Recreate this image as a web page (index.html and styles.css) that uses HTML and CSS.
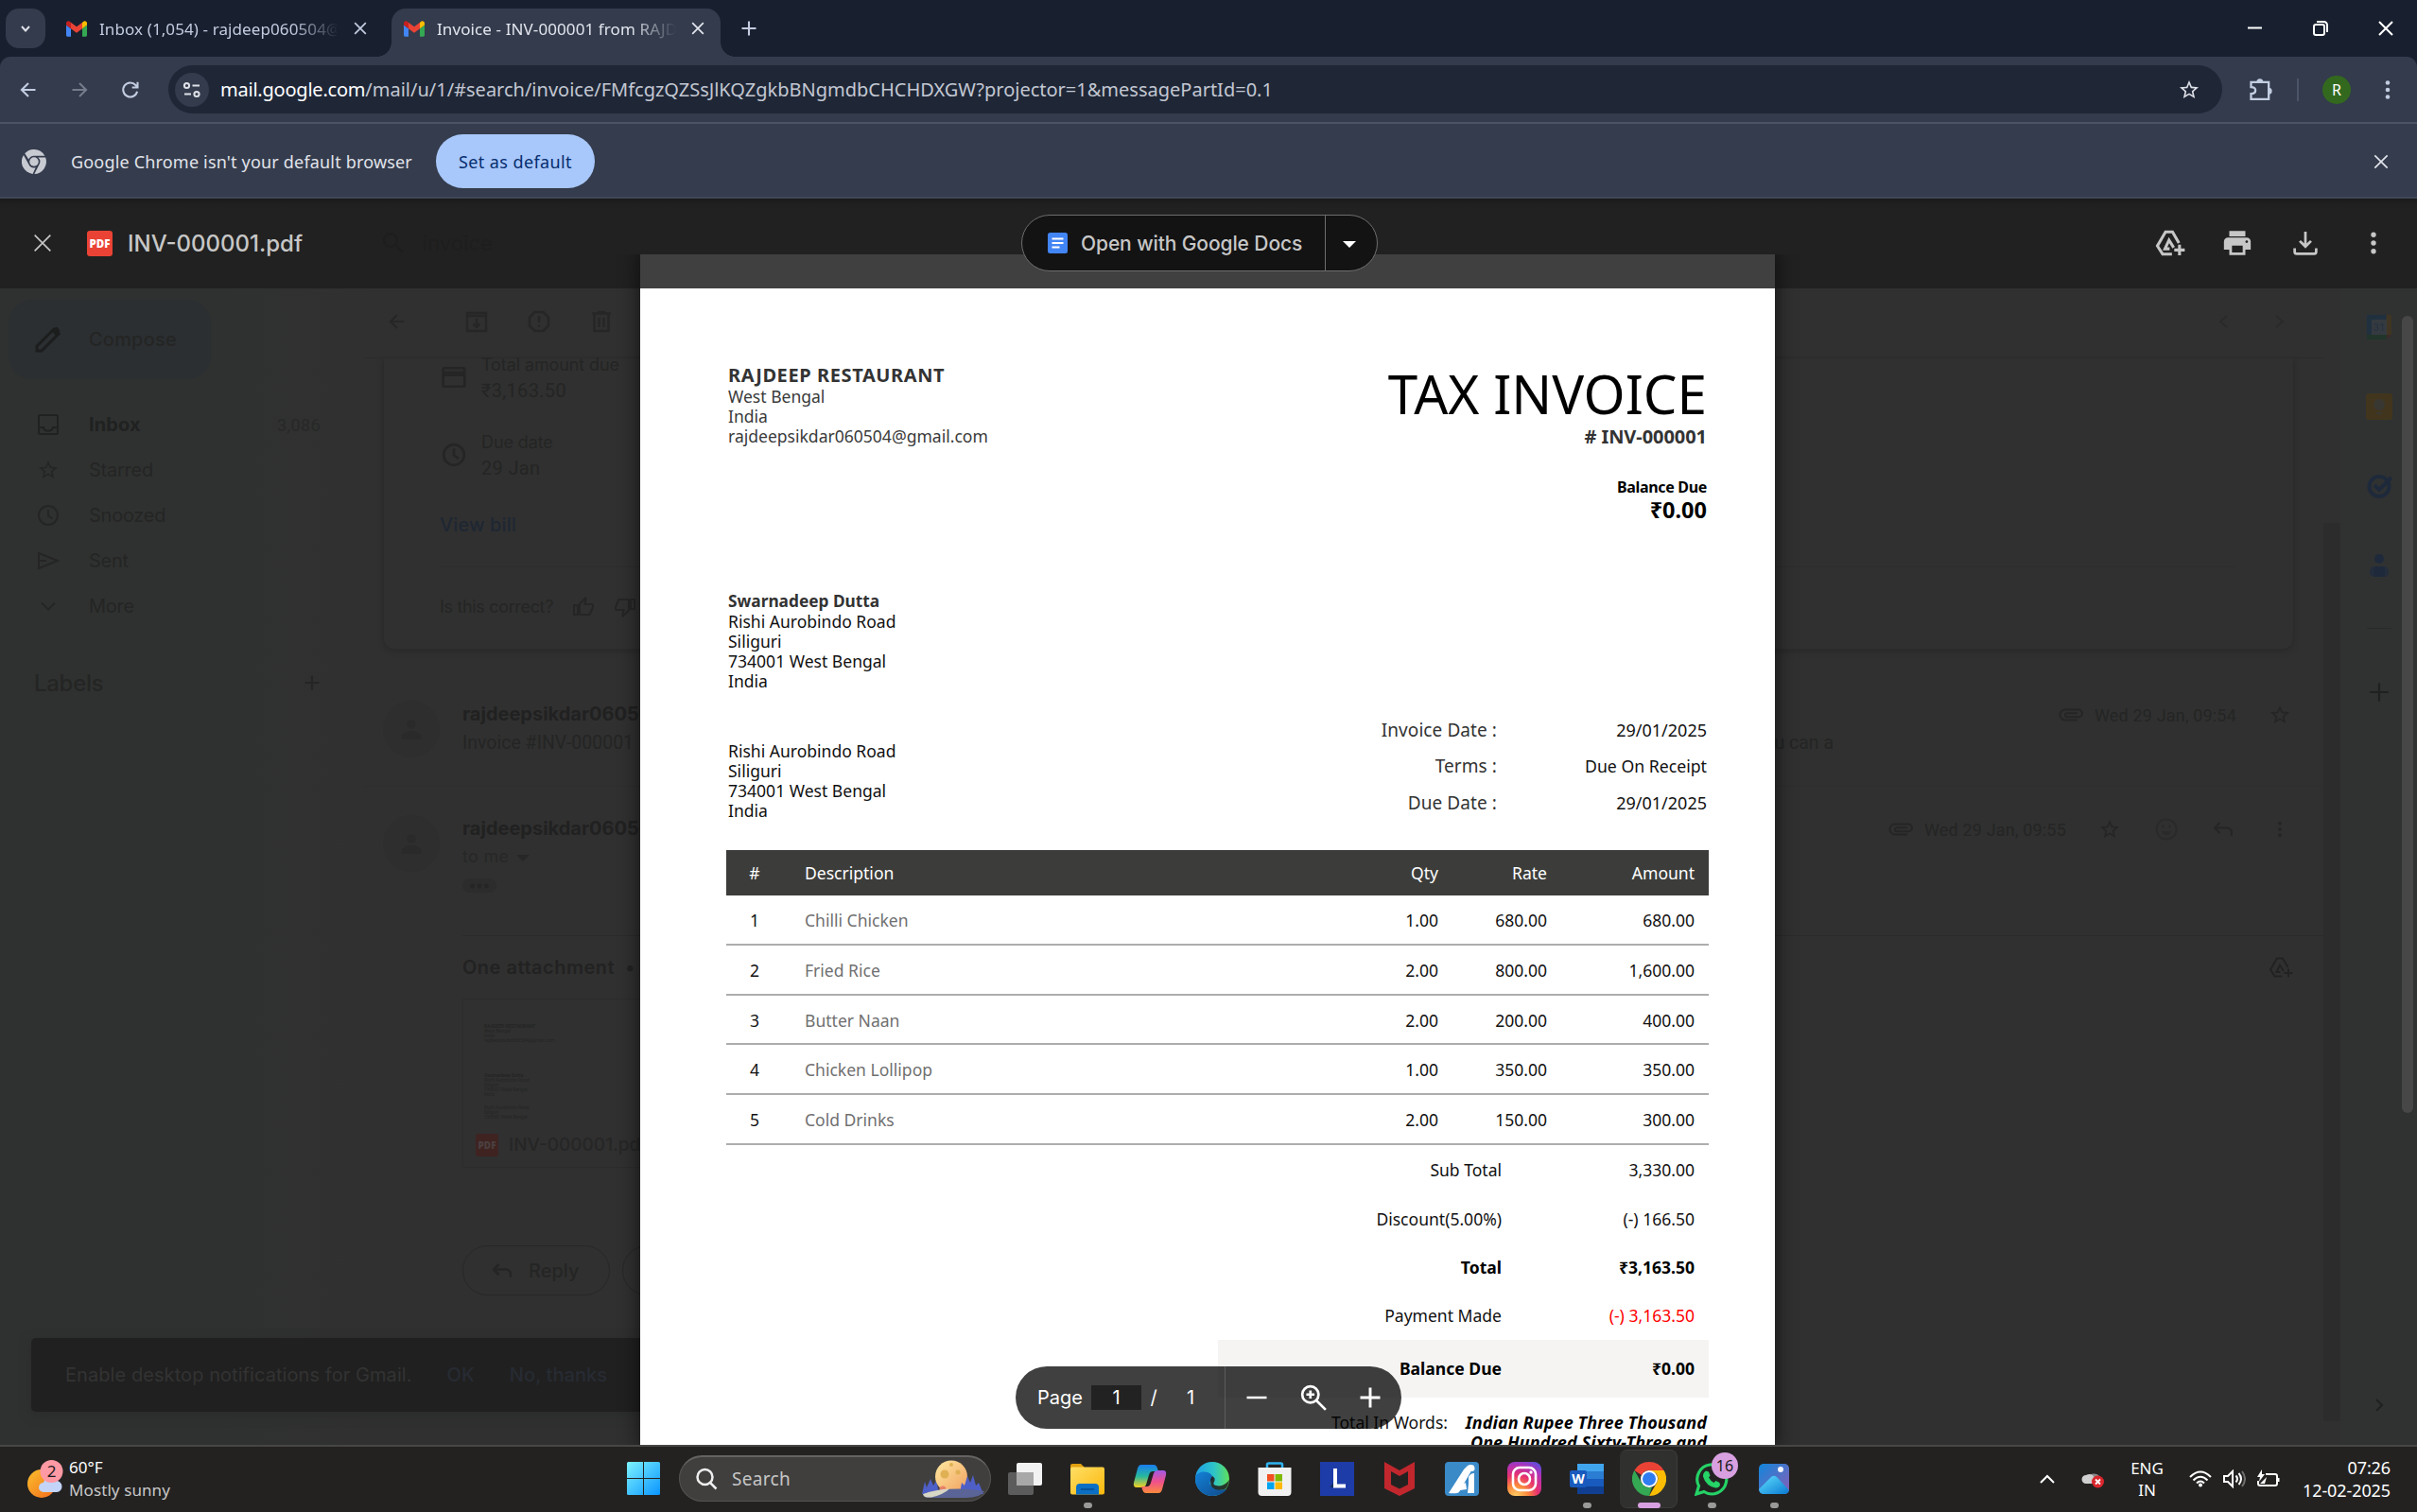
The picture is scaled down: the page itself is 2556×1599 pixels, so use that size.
FILE: index.html
```html
<!DOCTYPE html>
<html lang="en">
<head>
<meta charset="utf-8">
<title>Invoice - INV-000001</title>
<link rel="stylesheet" href="styles.css">
</head>
<body>
<svg class="defs" aria-hidden="true">
  <defs>
    <linearGradient id="g-win" x1="0" y1="0" x2="1" y2="1"><stop offset="0" stop-color="#7df3ff"/><stop offset="1" stop-color="#0a95ff"/></linearGradient>
    <linearGradient id="g-sun" x1="0" y1="0" x2="1" y2="1"><stop offset="0" stop-color="#fbc02d"/><stop offset="1" stop-color="#f26a1b"/></linearGradient>
    <linearGradient id="g-moon" x1="0" y1="0" x2="1" y2="1"><stop offset="0" stop-color="#ffe9a0"/><stop offset="1" stop-color="#f0a060"/></linearGradient>
    <linearGradient id="g-fold" x1="0" y1="0" x2="1" y2="1"><stop offset="0" stop-color="#ffdf66"/><stop offset="1" stop-color="#fbb80c"/></linearGradient>
    <linearGradient id="g-cop1" x1="0" y1="0" x2="0" y2="1"><stop offset="0" stop-color="#1a7df0"/><stop offset=".5" stop-color="#25b7a0"/><stop offset="1" stop-color="#f5d020"/></linearGradient>
    <linearGradient id="g-cop2" x1="0" y1="0" x2="0" y2="1"><stop offset="0" stop-color="#a259e6"/><stop offset=".5" stop-color="#f0508c"/><stop offset="1" stop-color="#fb8a3c"/></linearGradient>
    <linearGradient id="g-edge" x1="0" y1="0" x2="1" y2="0"><stop offset="0" stop-color="#1f9fe8"/><stop offset=".55" stop-color="#2dc4c8"/><stop offset="1" stop-color="#5fe05a"/></linearGradient>
    <linearGradient id="g-edge2" x1="0" y1="0" x2="1" y2="1"><stop offset="0" stop-color="#1282d8"/><stop offset="1" stop-color="#114a8b"/></linearGradient>
    <radialGradient id="g-ig" cx=".25" cy="1.05" r="1.2"><stop offset="0" stop-color="#ffd86b"/><stop offset=".3" stop-color="#fb8a3c"/><stop offset=".55" stop-color="#e8316f"/><stop offset=".8" stop-color="#b032b8"/><stop offset="1" stop-color="#5b4fe0"/></radialGradient>
    <linearGradient id="g-pho" x1="0" y1="0" x2="1" y2="1"><stop offset="0" stop-color="#0f86dc"/><stop offset=".6" stop-color="#5a6fc4"/><stop offset="1" stop-color="#8a5ab8"/></linearGradient>
    <linearGradient id="g-pho2" x1="0" y1="0" x2="1" y2="1"><stop offset="0" stop-color="#5fe0ff"/><stop offset="1" stop-color="#0a78d0"/></linearGradient>
  </defs>
  <symbol id="gmail" viewBox="52 42 88 66"><path fill="#4285f4" d="M58 108h14V74L52 59v43c0 3.320 2.690 6 6 6"/><path fill="#34a853" d="M120 108h14c3.320 0 6-2.690 6-6V59l-20 15"/><path fill="#fbbc04" d="M120 48v26l20-15v-8c0-7.420-8.470-11.650-14.400-7.200"/><path fill="#ea4335" d="M72 74V48l24 18 24-18v26L96 92"/><path fill="#c5221f" d="M52 51v8l20 15V48l-5.600-4.200c-5.940-4.450-14.400-.220-14.400 7.200"/></symbol>
  <symbol id="x" viewBox="0 0 24 24"><path class="ln" d="M2 2l20 20M22 2L2 22"/></symbol>
  <symbol id="plus" viewBox="0 0 24 24"><path class="ln" d="M12 3v18M3 12h18"/></symbol>
  <symbol id="back" viewBox="0 0 24 24"><path class="ln" d="M21 12H4M12 3.500L3.500 12l8.500 8.500"/></symbol>
  <symbol id="star" viewBox="0 0 24 24"><path d="M22 9.240l-7.190-.620L12 2 9.190 8.630 2 9.240l5.460 4.730L5.820 21 12 17.270 18.180 21l-1.630-7.030L22 9.240zM12 15.400l-3.760 2.270 1-4.280-3.320-2.880 4.380-.380L12 6.100l1.710 4.040 4.380.380-3.320 2.880 1 4.280L12 15.400z"/></symbol>
  <symbol id="dots" viewBox="0 0 24 24"><circle cx="12" cy="4.500" r="2.300"/><circle cx="12" cy="12" r="2.300"/><circle cx="12" cy="19.500" r="2.300"/></symbol>
  <symbol id="clock" viewBox="0 0 24 24"><circle class="ln" cx="12" cy="12" r="10"/><path class="ln" d="M12 6v6.500l4.500 3"/></symbol>
  <symbol id="reply" viewBox="0 0 24 24"><path class="ln" d="M8.500 5L3 10.500 8.500 16M3 10.500h13a5 5 0 0 1 5 5V19"/></symbol>
  <symbol id="drive" viewBox="0 0 26 24"><path class="ln" d="M14.500 21.500H6.500L2 14.500 9 2.500h6l5.500 9.500M12.500 17H8.500L12 9.500l4 6.500M21 13.500v9M16.500 18h9"/></symbol>
  <symbol id="clip" viewBox="0 0 26 14"><path class="ln" d="M20 12.500H7A5.500 5.500 0 0 1 7 1.500h14a3.900 3.900 0 0 1 0 7.800H9a1.800 1.800 0 0 1 0-4h11"/></symbol>
  <symbol id="person" viewBox="0 0 24 24"><circle cx="12" cy="7" r="4.800"/><path d="M1.500 23v-2.500C1.500 16.500 7 14 12 14s10.500 2.500 10.500 6.500V23z"/></symbol>
  <symbol id="thumb" viewBox="0 0 24 24"><path d="M9 21h9c.830 0 1.540-.500 1.840-1.220l3.020-7.050c.090-.230.140-.470.140-.730v-2c0-1.100-.900-2-2-2h-6.310l.950-4.570.030-.320c0-.410-.170-.790-.440-1.060L14.170 1 7.580 7.590C7.220 7.950 7 8.450 7 9v10c0 1.100.900 2 2 2zM9 9l4.340-4.340L12 10h9v2l-3 7H9V9zM1 9h6v12H1zM3 11v8h2v-8z" fill-rule="evenodd"/></symbol>
  <symbol id="chrome-mono" viewBox="0 0 24 24"><circle cx="12" cy="12" r="4.400"/><path d="M12 0a12 12 0 0 1 10.500 6.300H12a5.800 5.800 0 0 0-5.300 3.500L3 3.900A12 12 0 0 1 12 0zM23.200 7.800A12 12 0 0 1 12.300 24l4.600-9A5.800 5.800 0 0 0 16 7.800zM10.700 23.900A12 12 0 0 1 1.800 5.500l5 9a5.800 5.800 0 0 0 6.700 3.200z"/></symbol>
</svg>

<header class="tabs">
  <div class="tabsearch"><svg class="i14 w3" viewBox="0 0 14 14"><path class="ln" d="M3 5l4 4.500L11 5"/></svg></div>
  <div class="tab">
    <svg class="gm"><use href="#gmail"/></svg><span class="tabtxt">Inbox (1,054) - rajdeep060504@</span><svg class="i14 w3"><use href="#x"/></svg>
  </div>
  <div class="tab on">
    <svg class="gm"><use href="#gmail"/></svg><span class="tabtxt">Invoice - INV-000001 from RAJD</span><svg class="i14 w3"><use href="#x"/></svg>
  </div>
  <svg class="newtab w25"><use href="#plus"/></svg>
  <div class="win">
    <svg class="i16" viewBox="0 0 16 16"><path class="ln" d="M0 7.500h15"/></svg>
    <svg class="i16" viewBox="0 0 16 16"><path class="ln" d="M4 1h7.500A3.500 3.500 0 0 1 15 4.500V12"/><rect class="ln" x="1" y="4" width="11" height="11" rx="2"/></svg>
    <svg class="i16" viewBox="0 0 16 16"><path class="ln" d="M1 1l14 14M15 1L1 15"/></svg>
  </div>
</header>

<div class="toolwrap">
<nav class="toolbar">
  <svg class="i20 w25"><use href="#back"/></svg>
  <svg class="i20 w25 fwd"><use href="#back"/></svg>
  <svg class="i20 w25 rel" viewBox="0 0 24 24"><path class="ln" d="M20.500 14A9 9 0 1 1 18.500 6l2.500 2.500M21 2v7h-7"/></svg>
  <div class="omni">
    <span class="site"><svg class="i20" viewBox="0 0 20 20"><circle class="ln" cx="4.500" cy="5.500" r="2.600"/><path class="ln" d="M10.500 5.500H18M2 14.500h7"/><circle class="ln" cx="15" cy="14.500" r="2.600"/></svg></span>
    <span class="url"><b>mail.google.com</b>/mail/u/1/#search/invoice/FMfcgzQZSsJlKQZgkbBNgmdbCHCHDXGW?projector=1&amp;messagePartId=0.1</span>
    <svg class="i24"><use href="#star"/></svg>
  </div>
  <svg class="puz" viewBox="0 0 24 24"><path class="ln" d="M3 5h16v15.500H3v-5c3 0 4-1 4-3s-1-3-4-3z"/><path d="M8 5a3 3 0 0 1 6 0zM19 10a3 3 0 0 1 0 6z"/></svg>
  <i class="sep"></i><span class="me">R</span>
  <svg class="i24 kebab"><use href="#dots"/></svg>
</nav>
</div>

<div class="infobar">
  <svg class="cm"><use href="#chrome-mono"/></svg>
  <span class="infotxt">Google Chrome isn't your default browser</span>
  <button class="setdef">Set as default</button>
  <svg class="i14 closei"><use href="#x"/></svg>
</div>

<main class="stage">
  <div class="gmail">
    <aside class="side">
      <div class="compose"><svg class="pen" viewBox="0 0 28 28"><path class="ln" d="M2 26v-5L20 3l5 5L7 26z"/><path d="M18 5l4-4c1-1 5 3 4 5l-4 4z"/></svg>Compose</div>
      <ul class="folders">
        <li class="cur"><svg class="i24" viewBox="0 0 24 24"><rect class="ln" x="2" y="2" width="20" height="20" rx="1.500"/><path class="ln" d="M2 15h5c1 5 9 5 10 0h5"/></svg>Inbox<em>3,086</em></li>
        <li><svg class="i24"><use href="#star"/></svg>Starred</li>
        <li><svg class="i24 w2"><use href="#clock"/></svg>Snoozed</li>
        <li><svg class="i24 w2" viewBox="0 0 24 24"><path class="ln" d="M2 4l20 8-20 8zM2 12h8"/></svg>Sent</li>
        <li><svg class="i24 w2" viewBox="0 0 24 24"><path class="ln" d="M5 8.500l7 7 7-7"/></svg>More</li>
      </ul>
      <div class="labels">Labels<svg class="i20 w25"><use href="#plus"/></svg></div>
    </aside>

    <section class="mail">
      <div class="mtools">
        <svg class="i20 w25"><use href="#back"/></svg>
        <svg class="i24 w25 m1" viewBox="0 0 24 24"><path class="ln" d="M2 3h20v19H2zM2 6h20M12 9v9M8.500 14.500L12 18l3.500-3.500"/></svg>
        <svg class="i24 w25 m2" viewBox="0 0 24 24"><path class="ln" d="M7.500 2h9L22 7.500v9L16.500 22h-9L2 16.500v-9zM12 6v7M12 15.500V18"/></svg>
        <svg class="i24 w25 m2" viewBox="0 0 24 24"><path class="ln" d="M2 3.500h20M8 2h8M4.500 4v18h15V4M9.500 8v10M14.500 8v10"/></svg>
        <svg class="i16 faint m3" viewBox="0 0 16 16"><path class="ln" d="M12 2L5 8l7 6"/></svg>
        <svg class="i16 faint m4" viewBox="0 0 16 16"><path class="ln" d="M4 2l7 6-7 6"/></svg>
      </div>
      <div class="card">
        <div class="fact first"><svg class="i26 w25" viewBox="0 0 24 24"><rect class="ln" x="1.500" y="3" width="21" height="18" rx="1.500"/><path d="M2 6h20v5H2z"/></svg><p>Total amount due<strong>₹3,163.50</strong></p></div>
        <div class="fact"><svg class="i26 w25"><use href="#clock"/></svg><p>Due date<strong>29 Jan</strong></p></div>
        <a class="bill">View bill</a>
        <div class="ask">Is this correct?<svg class="i24"><use href="#thumb"/></svg><svg class="i24 down"><use href="#thumb"/></svg></div>
      </div>
      <article class="msg">
        <span class="ava"><svg class="i24"><use href="#person"/></svg></span>
        <div class="mtxt"><h3>rajdeepsikdar060504</h3><p class="snip"><span>Invoice #INV-000001</span><span>you can a</span></p></div>
        <div class="meta"><svg class="clipi"><use href="#clip"/></svg><time>Wed 29 Jan, 09:54</time><svg class="i24 s1"><use href="#star"/></svg></div>
      </article>
      <article class="msg two">
        <span class="ava"><svg class="i24"><use href="#person"/></svg></span>
        <div class="mtxt"><h3>rajdeepsikdar060504</h3><p class="tome">to me <i class="tri"></i></p><span class="trim"><svg viewBox="0 0 24 6"><circle cx="4" cy="3" r="2.600"/><circle cx="12" cy="3" r="2.600"/><circle cx="20" cy="3" r="2.600"/></svg></span></div>
        <div class="meta"><svg class="clipi"><use href="#clip"/></svg><time>Wed 29 Jan, 09:55</time><svg class="i24 s1"><use href="#star"/></svg>
          <svg class="i24 s2 faint" viewBox="0 0 24 24"><circle class="ln" cx="12" cy="12" r="10.500"/><path d="M7 14h10a5 4 0 0 1-10 0z"/><circle cx="8.500" cy="9" r="1.600"/><circle cx="15.500" cy="9" r="1.600"/></svg>
          <svg class="i24 s2"><use href="#reply"/></svg><svg class="i20 s2 kb"><use href="#dots"/></svg></div>
      </article>
      <div class="att">
        <div class="atth"><span>One attachment &nbsp;•</span><svg class="i26"><use href="#drive"/></svg></div>
        <div class="thumbn">
          <div class="mini"><b>RAJDEEP RESTAURANT</b><br>West Bengal<br>India<br>rajdeepsikdar060504@gmail.com</div>
          <div class="mini sec"><b>Swarnadeep Dutta</b><br>Rishi Aurobindo Road<br>Siliguri<br>734001 West Bengal<br>India</div>
          <div class="mini thi">Rishi Aurobindo Road<br>Siliguri<br>734001 West Bengal</div>
          <div class="fname"><span class="pdf dim">PDF</span>INV-000001.pdf</div>
        </div>
        <div class="acts"><span class="act"><svg class="i24 w25"><use href="#reply"/></svg>Reply</span><span class="act"></span></div>
      </div>
    </section>

    <div class="gut"><i></i></div>
    <aside class="apps">
      <svg class="i28" viewBox="0 0 28 28"><path fill="#20303f" d="M1 1h20v5H6v16H1z"/><path fill="#3f3522" d="M22 1h5v21h-5z"/><path fill="#21352a" d="M1 22h21v5H1z"/><path fill="#3d2a28" d="M22 22h5l-5 5z"/><path fill="#353a40" d="M6 6h16v16H6z"/><text x="14" y="18" font-size="11" text-anchor="middle" fill="#22303f" font-family="Roboto">31</text></svg>
      <svg class="i28" viewBox="0 0 28 28"><rect width="28" height="28" rx="3" fill="#42351d"/><circle cx="14" cy="12" r="6" fill="#383732"/><path fill="#383732" d="M11 20h6v2h-6z"/></svg>
      <svg class="i28" viewBox="0 0 28 28"><g stroke="#1e2a3b" stroke-width="4" fill="none"><circle cx="14" cy="14.500" r="10.500"/><path d="M9 13l5 5L27 5"/></g></svg>
      <svg class="i28" viewBox="0 0 28 28"><rect x="4" y="15" width="20" height="11" rx="5" fill="#232d3b"/><g fill="#1e2a3b"><circle cx="14" cy="7" r="5"/><path d="M8 26V19a4 4 0 0 1 4-4h4a4 4 0 0 1 4 4v7z"/></g></svg>
      <i class="rule"></i>
      <svg class="add"><use href="#plus"/></svg>
      <svg class="i16 chev" viewBox="0 0 16 16"><path class="ln" d="M5 2l6 6-6 6"/></svg>
    </aside>
    <div class="snack">Enable desktop notifications for Gmail.<a>OK</a><a>No, thanks</a></div>
  </div>

  <div class="viewer">
    <div class="vhead">
      <div class="vleft">
        <svg class="i20"><use href="#x"/></svg><span class="pdf">PDF</span><span class="file">INV-000001.pdf</span>
        <span class="query"><svg class="i24" viewBox="0 0 24 24"><circle class="ln" cx="9" cy="9" r="7"/><path class="ln" d="M14 14l8 8"/></svg>invoice</span>
      </div>
      <div class="openwith"><span class="ow1"><svg class="doc" viewBox="0 0 21 22"><rect width="21" height="22" rx="2.500" fill="#4285f4"/><path stroke="#fff" stroke-width="2" d="M4.500 6.500h12M4.500 11h12M4.500 15.500h8"/></svg>Open with Google Docs</span><span class="ow2"><i class="tri"></i></span></div>
      <div class="vright">
        <svg class="i32 w25"><use href="#drive"/></svg>
        <svg class="i32b" viewBox="0 0 24 24"><path d="M19 8H5c-1.660 0-3 1.340-3 3v6h4v4h12v-4h4v-6c0-1.660-1.340-3-3-3zm-3 11H8v-5h8v5zm3-7c-.550 0-1-.450-1-1s.450-1 1-1 1 .450 1 1-.450 1-1 1zm-1-9H6v4h12V3z"/></svg>
        <svg class="i26 w25" viewBox="0 0 24 24"><path class="ln" d="M12 1v14M6.500 10l5.500 5.500L17.500 10M1.500 17v3.500a2 2 0 0 0 2 2h17a2 2 0 0 0 2-2V17"/></svg>
        <svg class="i28"><use href="#dots"/></svg>
      </div>
    </div>

    <div class="sheet">
      <div class="strip"></div>
      <div class="itop">
        <div class="from"><h2>RAJDEEP RESTAURANT</h2><p>West Bengal<br>India<br>rajdeepsikdar060504@gmail.com</p></div>
        <div class="ttl"><h1>TAX INVOICE</h1><p class="no"># INV-000001</p><p class="bd">Balance Due</p><p class="bv">₹0.00</p></div>
      </div>
      <div class="addr"><h4>Swarnadeep Dutta</h4>Rishi Aurobindo Road<br>Siliguri<br>734001 West Bengal<br>India</div>
      <div class="ship">
        <div class="addr2">Rishi Aurobindo Road<br>Siliguri<br>734001 West Bengal<br>India</div>
        <dl class="dates"><dt>Invoice Date :</dt><dd>29/01/2025</dd><dt>Terms :</dt><dd class="t">Due On Receipt</dd><dt>Due Date :</dt><dd>29/01/2025</dd></dl>
      </div>
      <div class="items">
        <div class="r hd"><span>#</span><span>Description</span><span>Qty</span><span>Rate</span><span>Amount</span></div>
        <div class="r"><span>1</span><span>Chilli Chicken</span><span>1.00</span><span>680.00</span><span>680.00</span></div>
        <div class="r"><span>2</span><span>Fried Rice</span><span>2.00</span><span>800.00</span><span>1,600.00</span></div>
        <div class="r"><span>3</span><span>Butter Naan</span><span>2.00</span><span>200.00</span><span>400.00</span></div>
        <div class="r"><span>4</span><span>Chicken Lollipop</span><span>1.00</span><span>350.00</span><span>350.00</span></div>
        <div class="r"><span>5</span><span>Cold Drinks</span><span>2.00</span><span>150.00</span><span>300.00</span></div>
      </div>
      <div class="totals">
        <div class="tr"><span>Sub Total</span><span>3,330.00</span></div>
        <div class="tr"><span>Discount(5.00%)</span><span>(-) 166.50</span></div>
        <div class="tr bold"><span>Total</span><span>₹3,163.50</span></div>
        <div class="tr"><span>Payment Made</span><span class="red">(-) 3,163.50</span></div>
        <div class="tr bold due"><span>Balance Due</span><span>₹0.00</span></div>
      </div>
      <div class="words"><span>Total In Words:</span><em>Indian Rupee Three Thousand<br>One Hundred Sixty-Three and</em></div>
    </div>
    <div class="pager"><span class="pg">Page</span><span class="fld">1</span><span class="sl">/</span><span class="n">1</span>
      <div class="zm"><svg class="i28" viewBox="0 0 28 28"><path class="ln w25" d="M3.500 14h21"/></svg>
      <svg class="i28 w25" viewBox="0 0 26 26"><circle class="ln" cx="10" cy="10" r="8"/><path class="ln" d="M16 16l9 9M10 6v8M6 10h8"/></svg>
      <svg class="i28 w25"><use href="#plus"/></svg></div></div>
    <i class="vscroll"></i>
  </div>
</main>

<footer class="task">
  <div class="wx">
    <svg class="wxi" viewBox="0 0 40 42"><circle cx="15" cy="25" r="15" fill="url(#g-sun)"/><path fill="#c3d4f8" d="M17 34a5 5 0 0 1 0-10 7 7 0 0 1 13-2 5 5 0 0 1 1 12z"/><circle cx="25.500" cy="12" r="12" fill="#ff99a4"/><text x="25.500" y="18" font-size="17" text-anchor="middle" fill="#1a1a1a" font-family="Noto Sans">2</text></svg>
    <p>60°F<span>Mostly sunny</span></p>
  </div>
  <svg class="start" viewBox="0 0 35 35"><path fill="url(#g-win)" d="M0 1.500Q0 0 1.500 0H17v17H0zM18 0h15.500Q35 0 35 1.500V17H18zM0 18h17v17H1.500Q0 35 0 33.500zM18 18h17v15.500q0 1.500-1.500 1.500H18z"/></svg>
  <div class="search">
    <svg class="i24 w25" viewBox="0 0 24 24"><circle class="ln" cx="10.500" cy="10" r="8"/><path class="ln" d="M16 16l6.500 6.500"/></svg>Search
    <svg class="art" viewBox="0 0 66 40"><g transform="translate(0 -6)"><path fill="#4f5fc8" d="M0 42l3-13 2 6 4-9 3 7 3-5 3 12z"/></g><circle cx="31" cy="17.500" r="17" fill="url(#g-moon)"/><g fill="#e0b054"><circle cx="24" cy="15" r="4.500"/><circle cx="38" cy="13" r="2.500"/><circle cx="31" cy="5" r="2"/></g><circle cx="22" cy="31" r="3.500" fill="#e88068"/><path fill="#4f5fc8" d="M40 35l2-11 3 3 3-10 3 7 3-8 3 11 3-3 5 12z"/><path fill="#5a6496" d="M1 36q30-9 65-3-4 7-20 7H6q-4 0-5-4z"/><path fill="#d8d6c4" d="M1 36q14-5 28-5.500-6 6-19 9H6q-4 0-5-3.500z"/></svg>
  </div>
  <div class="icons">
    <span><svg viewBox="0 0 36 36"><rect x="0" y="11" width="27" height="24" rx="2" fill="#5c5c5c"/><rect x="9" y="1" width="27" height="24" rx="2" fill="#f2f2f2"/><path fill="#a8a8a8" d="M9 11h18v14H9z"/></svg></span>
    <span class="run"><svg viewBox="0 0 36 36"><path fill="#e0a010" d="M0 4q0-2 2-2h9l4 4v4H0z"/><rect y="5.500" width="36" height="29" rx="2" fill="url(#g-fold)"/><path fill="#0b6fc4" d="M6 34.500V27q0-4 4-4h16q4 0 4 4v7.500z"/><path stroke="#064a90" stroke-width="1.500" d="M11 29h14"/></svg></span>
    <span><svg viewBox="0 0 36 36"><path fill="url(#g-cop1)" d="M9 3h13q3 0 4 4l1 3h-6q-3 0-4 4l-3 10q-1 3-5 3H4q-4 0-3-5L5 7q1-4 4-4z"/><path fill="url(#g-cop2)" d="M27 33H14q-3 0-4-4l-1-3h6q3 0 4-4l3-10q1-3 5-3h5q4 0 3 5l-4 15q-1 4-4 4z"/></svg></span>
    <span><svg viewBox="0 0 36 36"><circle cx="18" cy="18" r="18" fill="url(#g-edge)"/><path fill="url(#g-edge2)" d="M0 18C0 12 7 9 13 11q6 2 6 8-5 1-3 5 3 7 17 5-5 7-15 7A18 18 0 0 1 0 18z"/><path fill="#232221" d="M18 15q4 2 2 6-2 3 2 4 8 2 14-6-2 9-5 10-15 3-15-8 0-4 2-6z" opacity=".9"/></svg></span>
    <span><svg viewBox="0 0 36 36"><path d="M10 8V3q0-1.500 1.500-1.500h13Q26 1.500 26 3v5" fill="none" stroke="#30b4f0" stroke-width="2.500"/><path fill="#f1f1f1" d="M0.500 6h35v26q0 4-4 4h-27q-4 0-4-4z"/><path fill="#f25022" d="M10 13h7.500v7.500H10z"/><path fill="#7fba00" d="M18.500 13H26v7.500h-7.500z"/><path fill="#00a4ef" d="M10 21.500h7.500V29H10z"/><path fill="#ffb900" d="M18.500 21.500H26V29h-7.500z"/></svg></span>
    <span><svg viewBox="0 0 36 36"><path fill="#1e3ca8" d="M0 0h36v36H0z"/><path fill="#123060" d="M10 27l5-6 10 6z"/><path d="M16 7v18.500h11" fill="none" stroke="#fff" stroke-width="4"/></svg></span>
    <span><svg viewBox="0 0 36 36"><path fill="#c2272d" d="M2 0l16 9L34 0v28l-16 8L2 28zM9 10v14l9 4.500 9-4.500V10l-9 5z" fill-rule="evenodd"/></svg></span>
    <span><svg viewBox="0 0 36 36"><rect width="36" height="36" rx="4" fill="#3b8ac8"/><path fill="#fff" d="M24 4q3-2 7 0L15 32q-2 2-11 1L20 8zM25 16q2-4 6-4v21h-7l1-10zM15 26l7-4 1 7-7 1z"/><circle cx="28.500" cy="7" r="3" fill="#fff"/></svg></span>
    <span><svg viewBox="0 0 36 36"><rect width="36" height="36" rx="8" fill="url(#g-ig)"/><g fill="none" stroke="#fff" stroke-width="2.600"><rect x="6" y="6" width="24" height="24" rx="7"/><circle cx="18" cy="18" r="6"/></g><circle cx="25" cy="11" r="1.700" fill="#fff"/></svg></span>
    <span class="run"><svg viewBox="0 0 36 36"><path fill="#41a5ee" d="M8 2h28v9H8z"/><path fill="#2b7cd3" d="M8 10h28v8H8z"/><path fill="#185abd" d="M8 18h28v8H8z"/><path fill="#103f91" d="M8 26h28v8H8z"/><rect y="9" width="18" height="18" rx="2" fill="#185abd"/><text x="9" y="23" font-size="14" font-weight="700" text-anchor="middle" fill="#fff" font-family="Open Sans">W</text></svg></span>
    <span class="act-app"><svg viewBox="0 0 36 36"><path fill="#ea4335" d="M18 0a18 18 0 0 1 15.600 9H18a9 9 0 0 0-8 5L2.400 9A18 18 0 0 1 18 0z"/><path fill="#fbbc04" d="M33.600 9A18 18 0 0 1 18 36l7.800-13.500A9 9 0 0 0 25 12l-7-3z"/><path fill="#34a853" d="M2.400 9l7.800 13.500A9 9 0 0 0 21 26.500L18 36A18 18 0 0 1 2.400 9z"/><circle cx="18" cy="18" r="9" fill="#fff"/><circle cx="18" cy="18" r="7" fill="#2f7cf0"/></svg></span>
    <span class="run"><svg viewBox="0 0 36 36"><path d="M2 34l2.500-8.500A15.500 15.500 0 1 1 10 31.500z" fill="#232221" stroke="#25d366" stroke-width="3.200"/><path fill="#25d366" d="M12 9.500l3 1 1.500 4-1.500 2q2 4 5.500 5.500l2-2 4 2 .500 3q-2 3-5 2.500-10-2-13-12-.300-4 3-6z"/></svg><b class="bdg">16</b></span>
    <span class="run"><svg viewBox="0 0 36 36"><rect x="2" y="2" width="32" height="32" rx="5" fill="url(#g-pho)"/><path fill="url(#g-pho2)" d="M2 29l13-13q3-2.500 6 0l13 14q-1 4-5 4H7q-4 0-5-5z"/><circle cx="25" cy="8" r="3" fill="#f0f4ff"/></svg></span>
  </div>
  <div class="tray">
    <svg class="i16" viewBox="0 0 16 16"><path class="ln" d="M1 12l7-7 7 7"/></svg>
    <svg class="cl" viewBox="0 0 24 20"><path fill="#8a8a8a" d="M7 8a7 6 0 0 1 12-1v7H7z"/><path fill="#d0d0d0" d="M5 15a4.500 4.500 0 0 1 0-9q6-3 9 3v6z"/><circle cx="17.500" cy="13" r="6.500" fill="#d9262c"/><path stroke="#fff" stroke-width="1.800" d="M15 10.500l5 5M20 10.500l-5 5"/></svg>
    <p class="lang">ENG<br>IN</p>
    <svg class="wifi" viewBox="0 0 24 18"><path class="ln" d="M1 7q11-11 22 0M4.500 10.500q7.500-7.500 15 0M8 13.500q4-4 8 0"/><circle cx="12" cy="15.500" r="2"/></svg>
    <svg class="vol" viewBox="0 0 24 20"><path class="ln" d="M1 7h4l5-5v16l-5-5H1zM13.500 6.500q3 3.500 0 7M16.500 4q5 6 0 12"/><path class="ln" opacity=".35" d="M20 2q6 8 0 16"/></svg>
    <svg class="bat" viewBox="0 0 24 20"><path class="ln" d="M9 5h10q2 0 2 2v8q0 2-2 2H3q-2 0-2-2v-3M22.500 9v4"/><path d="M5 0L0 8h3l-1 5 6-8H5zM3 15h5l2-7z"/></svg>
    <p class="now">07:26<br>12-02-2025</p>
  </div>
</footer>
</body>
</html>
```

FILE: styles.css
```css
*{box-sizing:border-box;margin:0;padding:0}
body{width:2556px;height:1599px;overflow:hidden;display:flex;flex-direction:column;background:#232221;font-family:"Noto Sans","Open Sans",sans-serif;color:#dfe1e8}
.defs{position:absolute;width:0;height:0}
svg{flex:none;display:block;fill:currentColor;stroke-width:2}
.ln{fill:none;stroke:currentColor;stroke-width:inherit}
.w25{stroke-width:2.5}
.w3{stroke-width:3}
.i14{width:14px;height:14px}.i16{width:16px;height:16px}.i20{width:20px;height:20px}.i24{width:24px;height:24px}.i26{width:26px;height:26px}.i28{width:28px;height:28px}.i32{width:32px;height:30px}.i32b{width:34px;height:34px}

/* tab strip */
.tabs{height:60px;flex:none;display:flex;background:#18202f;padding-left:6px}
.tabsearch{width:42px;height:42px;margin-top:9px;border-radius:14px;background:#333b4c;display:grid;place-items:center}
.tabsearch svg{stroke-width:2}
.tab{display:flex;align-items:center;height:51px;margin-top:9px;padding-bottom:9px;width:362px;padding-left:22px;color:#c3cbe0}
.tab.on{width:348px;margin-left:4px;padding-left:13px;background:#333b4c;border-radius:15px 15px 0 0;color:#e2e5ee;position:relative}
.tab.on::before,.tab.on::after{content:"";position:absolute;bottom:0;width:15px;height:15px}
.tab.on::before{left:-15px;background:radial-gradient(circle at 0 0,transparent 14.500px,#333b4c 15px)}
.tab.on::after{right:-15px;background:radial-gradient(circle at 100% 0,transparent 14.500px,#333b4c 15px)}
.gm{width:22px;height:17px}
.tabtxt{width:253px;margin:0 16px 0 13px;overflow:hidden;white-space:nowrap;font-size:17px;letter-spacing:.1px;-webkit-mask-image:linear-gradient(90deg,#000 205px,transparent 253px);mask-image:linear-gradient(90deg,#000 205px,transparent 253px)}
.newtab{width:20px;height:20px;margin:20px 0 0 20px;color:#c3cbe0}
.win{margin-left:auto;display:flex;gap:53px;padding:22px 25px 0 0;color:#fff}

/* toolbar */
.toolwrap{background:#18202f;flex:none;height:71px}
.toolbar{height:71px;background:#333b4c;border-radius:11px 11px 0 0;border-bottom:2px solid #4c5464;display:flex;align-items:center;padding-left:20px;color:#c3cde2}
.fwd{transform:scaleX(-1);margin-left:34px;color:#757c8b}
.rel{margin:0 0 0 34px}
.omni{margin-left:30px;width:2172px;height:51px;border-radius:26px;background:#1f2737;display:flex;align-items:center;padding:0 23px 0 7px;color:#dfe1e8}
.site{width:36px;height:36px;border-radius:50%;background:#333b4c;display:grid;place-items:center}
.url{flex:1;font-size:20px;margin-left:12px;color:#c3c7d2}
.url b{font-weight:400;color:#fff;letter-spacing:-.22px}
.puz{width:28px;height:28px;margin-left:27px}
.sep{width:2px;height:24px;background:#4b5467;margin:0 25px 0 24px}
.me{width:30px;height:30px;border-radius:50%;background:#33691e;color:#fff;font-size:16px;line-height:30px;text-align:center}
.kebab{margin-left:27px}
.infobar{height:79px;flex:none;background:#343c4d;border-bottom:2px solid #3f4758;display:flex;align-items:center;padding:2px 0 0 23px;color:#e1e3ea}
.cm{width:26px;height:26px;color:#c8cad2}
.infotxt{font-size:18px;letter-spacing:.18px;width:361px;margin-left:26px;white-space:nowrap}
.setdef{margin-left:25px;width:168px;height:57px;border:0;border-radius:29px;background:#a8c7fa;color:#062e6f;font:18px "Noto Sans",sans-serif;letter-spacing:.4px}
.closei{margin:0 30px 0 auto;width:16px;height:16px;stroke-width:2.5}

/* page area */
.stage{height:1318px;flex:none;position:relative;overflow:hidden;background:#303232}
.gmail{height:1318px;padding-top:95px;display:grid;grid-template-columns:385px 2072px 18px 81px;font-family:Inter,Roboto,sans-serif;font-size:20px;color:#242524}
.side{background:linear-gradient(90deg,#2f3130 60%,#303030)}
.compose{margin:12px 0 0 9px;width:214px;height:84px;border-radius:25px;background:#2b2f32;display:flex;align-items:center;gap:29px;padding-left:28px;font-weight:500;letter-spacing:.2px}
.pen{width:28px;height:28px;color:#1c1d1d;stroke-width:3}
.folders{list-style:none;margin-top:24px}
.folders li{height:48px;display:flex;align-items:center;gap:31px;padding:0 46px 0 39px;letter-spacing:-.25px}
.folders .cur{font-weight:700;letter-spacing:.1px;color:#202121}
.folders em{font:400 18px Roboto;letter-spacing:.4px;margin-left:auto;color:#272828}
.labels{margin-top:33px;height:48px;display:flex;align-items:center;justify-content:space-between;padding:0 45px 0 36px;font-size:24px;font-weight:500;letter-spacing:-.3px}
.mail{background:#303030}
.mtools{height:74px;border-bottom:1px solid #2c2c2c;display:flex;align-items:center;padding:0 38px 3px 25px;color:#262626}
.m1{margin-left:62px}.m2{margin-left:42px}.m3{margin-left:auto}.m4{margin-left:44px}
.card{display:flow-root;margin-left:20px;width:2021px;height:308px;border:1px solid #2b2b2b;border-top:0;border-radius:0 0 12px 12px;box-shadow:0 2px 5px #2a2a2a;padding-left:59px}
.fact{height:82px;display:flex;align-items:center;gap:16px;padding-left:2px}
.fact.first{margin-top:-21px}
.fact p{font-size:18px;letter-spacing:-.1px;line-height:27px}
.fact strong{display:block;font:400 20px/28px Roboto;letter-spacing:.33px}
.bill{display:block;line-height:40px;margin-top:13px;color:#1e2733;font-weight:500;letter-spacing:.1px}
.ask{margin-top:24px;width:1899px;border-top:1px solid #2c2c2c;height:84px;display:flex;align-items:center;font-size:18px;letter-spacing:-.33px}
.ask svg{margin-left:20px}.ask .down{transform:rotate(180deg)}
.msg{height:145px;padding:54px 34px 0 20px;display:flex;border-bottom:1px solid #2e2e2e}
.msg.two{height:157px;padding-top:30px;border:0}
.ava{width:60px;height:60px;border-radius:50%;background:#2e2e2e;color:#2a2a2a;display:grid;place-items:center;margin-right:24px;flex:none}
.mtxt{width:1450px}
.msg h3{font-size:20px;line-height:29px;color:#212121}
.snip{display:flex;justify-content:space-between;font:400 19.500px/31px Roboto}
.tome{font-size:18px;line-height:29px;color:#272727;letter-spacing:.3px}
.tri{display:inline-block;border:7px solid transparent;border-top-color:currentColor;border-bottom:0;vertical-align:middle;margin-left:2px}
.trim{display:grid;place-items:center;width:36px;height:15px;border-radius:8px;background:#2c2c2c;margin-top:9px}
.trim svg{width:22px;height:6px}
.meta{margin-left:auto;height:30px;display:flex;align-items:center}
.clipi{width:26px;height:14px;margin-right:12px}
time{font:400 18px Roboto;letter-spacing:.17px;width:150px;white-space:nowrap}
.s1{margin-left:34px}.s2{margin-left:36px}.kb{margin-right:2px;margin-left:38px}.faint{color:#2a2a2a}
.att{margin-left:104px;border-top:1px solid #2b2b2b}
.atth{height:66px;display:flex;align-items:center;justify-content:space-between;padding-right:32px;font-weight:600;letter-spacing:.5px;color:#222}
.thumbn{width:270px;height:179px;border:1px solid #2c2c2c;padding:26px 0 0 22px;overflow:hidden;position:relative}
.mini{font:5px/5px Roboto;height:52px;white-space:nowrap}
.mini.sec{height:34px}.mini.thi{height:15px;overflow:hidden}
.fname{position:absolute;left:0;right:0;bottom:0;height:47px;display:flex;align-items:center;gap:11px;padding-left:13px;background:#303030;color:#262626;font-size:19px;font-weight:500}
.acts{display:flex;gap:13px;margin-top:82px}
.act{width:156px;height:53px;border:1px solid #272727;border-radius:27px;display:flex;align-items:center;gap:16px;padding-left:29px;font-weight:500}
.gut{background:#303030;padding-top:248px}
.gut i{display:block;height:950px;background:#2c2c2c}
.apps{background:#303232;display:flex;flex-direction:column;align-items:center;padding-top:27px;gap:56px;color:#1f2020}
.rule{width:26px;height:1px;background:#292b2b;margin-top:-4px}
.add{width:26px;height:26px;margin-top:-2px}.chev{margin-top:auto;margin-bottom:34px}
.snack{position:absolute;left:33px;top:1205px;width:760px;height:78px;border-radius:5px;background:#202020;color:#333;display:flex;align-items:center;padding-left:36px;box-shadow:0 3px 12px #2a2b2b;letter-spacing:.07px}
.snack a{color:#272b33;font-weight:500;margin-left:37px}

/* attachment viewer over the mailbox */
.viewer{position:absolute;inset:0;display:flex;flex-direction:column}
.vhead{height:95px;flex:none;background:linear-gradient(#1b1b1b,#212121 9px);display:flex;align-items:center;padding-bottom:1px;color:#c7c7c7;font-family:Inter,Roboto,sans-serif}
.vleft{width:1080px;display:flex;align-items:center;padding-left:35px}
.pdf{width:27px;height:27px;margin-left:37px;border-radius:3px;background:#ea4335;color:#fff;font:800 11.500px/27px "Open Sans";text-align:center}
.pdf.dim{width:24px;height:24px;line-height:24px;margin:0;background:#3f2321;color:#4a4040;font-size:10px}
.file{font-size:24px;font-weight:500;margin-left:16px}
.query{display:flex;align-items:center;gap:19px;font-size:22px;color:#1e1e1e;margin-left:84px}
.openwith{width:377px;height:60px;border:1.500px solid #6e6e6e;border-radius:30px;background:#131314;display:flex;position:relative;z-index:2;font-weight:500;font-size:21px;letter-spacing:-.1px}
.ow1{width:321px;border-right:1px solid #6e6e6e;display:flex;align-items:center;padding-left:27px;white-space:nowrap}
.doc{width:21px;height:22px;margin-right:14px}
.ow2{flex:1;display:grid;place-items:center;color:#fff}.ow2 .tri{margin:2px 5px 0 0}
.vright{margin-left:auto;display:flex;align-items:center;padding-right:32px}
.vright svg{margin-left:40px}.vright svg:nth-child(2){margin-left:38px}.vright svg:nth-child(3){margin-left:42px}.vright svg:nth-child(4){margin-left:45px}
.sheet{width:1200px;height:1259px;margin:-36px 0 0 677px;flex:none;background:#fff;box-shadow:0 0 18px 4px rgba(0,0,0,.45);clip-path:inset(0 -30px);color:#111;position:relative;overflow:hidden;font-size:17.550px;line-height:21px}
.strip{height:36px;background:#404040}
.itop{height:320px;padding:80px 72px 0 93px;display:flex;justify-content:space-between}
.from h2{font-size:20px;line-height:23px;letter-spacing:.6px;color:#333}
.from p{font-size:17.550px;color:#3a3a3a;padding-top:1px}
.ttl{text-align:right;padding-top:2px}
.ttl h1{font-size:56.500px;font-weight:400;line-height:60px;letter-spacing:0;color:#000}
.no{font-size:20px;font-weight:700;line-height:24px;letter-spacing:-.05px;color:#333;margin-top:3px}
.bd{font-size:16px;font-weight:700;line-height:22px;letter-spacing:-.33px;margin-top:30px;color:#000}
.bv{font-size:23.500px;font-weight:700;line-height:26px;color:#000}
.addr{height:127px;padding-left:93px}
.addr h4{font-size:17.300px;line-height:21px;padding-bottom:1px;color:#333}
.ship{height:147px;display:flex;justify-content:space-between;padding:1px 72px 0 93px}
.addr2{padding-top:31px}
.dates{display:grid;grid-template-columns:auto 222px;grid-auto-rows:38.500px;align-items:center;height:116px;text-align:right}
.dates dt{font-size:19px;letter-spacing:.08px;color:#333}
.dates dd{font-size:18px}.dates .t{font-size:17.700px}
.items{margin:0 70px 0 91px}
.r{display:grid;grid-template-columns:60px 1fr 150px 115px 171px;align-items:center;height:52.750px;border-bottom:2px solid #adadad;text-align:right;padding-top:2.500px}
.r.hd{height:48px;background:#3c3d3a;color:#fff;border:0;padding:1px 0 0}
.r span:first-child{text-align:center}
.r span:nth-child(2){text-align:left;padding-left:23px;color:#707070}
.r.hd span:nth-child(2){color:#fff}
.r span:last-child{padding-right:15px}
.totals{margin:1px 70px 0 0;padding-left:611px}
.tr{display:grid;grid-template-columns:1fr 204px;height:51.300px;align-items:center;text-align:right;padding:1px 15px 0 0}
.bold{font-weight:700;color:#000}
.red{color:#f00}
.due{height:61px;background:#f5f4f3}
.words{display:grid;grid-template-columns:1fr 256px;gap:18px;margin-top:16px;padding-right:72px;text-align:right}
.words em{font-weight:700;font-size:18px;letter-spacing:.1px;white-space:nowrap;color:#000}
.pager{position:absolute;left:1074px;top:1235px;width:408px;height:66px;border-radius:33px;background:rgba(0,0,0,.75);display:flex;align-items:center;color:#fff;font:400 20px Inter,Roboto,sans-serif}
.pg{margin-left:23px;width:57px}
.fld{width:53px;height:26px;background:#222;line-height:26px;text-align:center}
.sl{width:26px;text-align:center}.n{width:52px;text-align:center}
.zm{margin-left:10px;height:66px;border-left:1px solid #5c5c5c;display:flex;align-items:center;gap:32px;padding-left:19px}
.vscroll{position:absolute;left:2540px;top:124px;width:12px;height:843px;border-radius:6px;background:#464746}

/* taskbar */
.task{height:71px;flex:none;border-top:2px solid #464644;background:#232221;display:flex;align-items:center;color:#fff;font-size:17px;padding-bottom:2px}
.wx{width:663px;display:flex;padding-left:29px;line-height:24px}
.wxi{width:40px;height:42px;margin-top:4px}
.wx p{margin-left:4px}.wx span{display:block;color:#c8c8c8;letter-spacing:.1px}
.start{width:35px;height:35px}
.search{margin-left:20px;width:330px;height:49px;border-radius:25px;background:#403f3e;border:1px solid #545352;border-top:2px solid #656463;display:flex;align-items:center;padding-left:16px;font-size:19px;letter-spacing:.3px;color:#c6c6c6;gap:15px}
.search .i24{color:#eee}
.art{width:66px;height:40px;margin:0 6px 0 auto}
.icons{display:flex;margin-left:3px}
.icons span{width:66px;height:68px;display:grid;place-items:center;position:relative}
.icons svg{width:36px;height:36px}
.icons .run::after,.icons .act-app::after{content:"";position:absolute;bottom:3px;left:29px;width:9px;height:6px;border-radius:3px;background:#9a9a99}
.icons .act-app::before{content:"";position:absolute;left:2px;top:3px;width:60px;height:60px;border-radius:8px;background:#30302e;border:1px solid #3c3c3a;border-left-width:0}
.act-app svg{position:relative}
.icons .act-app::after{left:21px;width:24px;background:#d8a0e0}
.bdg{position:absolute;left:33px;top:6px;width:28px;height:28px;border-radius:50%;background:#d8a0e0;color:#1b1b1b;font-weight:400;font-size:16px;line-height:28px;text-align:center}
.tray{margin-left:auto;display:flex;align-items:center;padding-right:28px;line-height:24px}
.cl{width:24px;height:20px;margin-left:28px}
.lang{width:35px;text-align:center;margin-left:28px;line-height:23px}
.wifi{width:24px;height:18px;margin-left:27px}
.vol{width:24px;height:20px;margin-left:12px}
.bat{width:24px;height:20px;margin-left:12px}
.now{text-align:right;margin-left:24px;font-size:18px;letter-spacing:-.1px}
```
